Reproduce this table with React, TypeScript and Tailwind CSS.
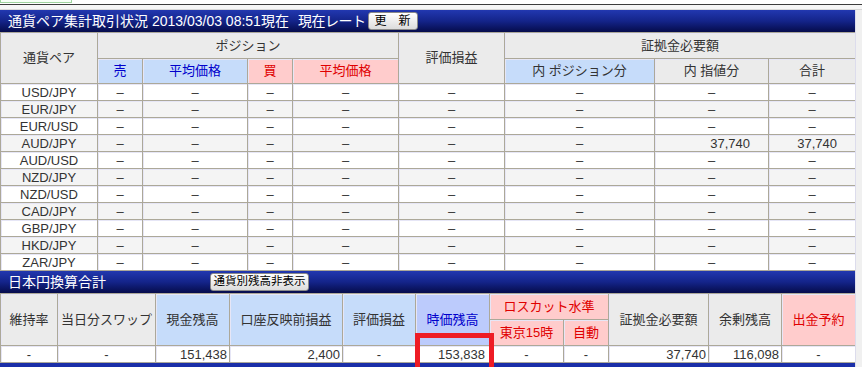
import React from 'react'

const FONT = { fontFamily: '"Liberation Sans", "Noto Sans CJK JP", sans-serif' }

const PAIRS = ['USD/JPY', 'EUR/JPY', 'EUR/USD', 'AUD/JPY', 'AUD/USD', 'NZD/JPY', 'NZD/USD', 'CAD/JPY', 'GBP/JPY', 'HKD/JPY', 'ZAR/JPY']

// orders on AUD/JPY only
const ORDER_MARGIN: Record<string, string> = { 'AUD/JPY': '37,740' }

const cell = 'border border-[#aca899] p-0 shadow-[inset_1px_1px_0_#e6e6f6]'
const grayHead = `${cell} bg-[#ebebeb] text-[#333] font-normal`
const blueHead = `${cell} bg-[#c6dcfa] text-[#0000cc] font-normal`
const redHead = `${cell} bg-[#ffcccc] text-[#e00000] font-normal`

function TitleBar({ children }: { children: React.ReactNode }) {
  return (
    <div className="h-[22px] flex items-center bg-gradient-to-b from-[#2238b0] via-[#14248a] to-[#060c4c] text-white">
      {children}
    </div>
  )
}

function GrayButton({ children, className }: { children: React.ReactNode; className?: string }) {
  return (
    <button className={`h-[18px] flex items-center justify-center whitespace-pre rounded-[3px] border border-[#8a8a8a] bg-gradient-to-b from-white to-[#dcdcdc] text-black leading-none ${className ?? ''}`}>
      {children}
    </button>
  )
}

function PairTable() {
  return (
    <table className="table-fixed border-collapse w-[855px] text-[13px] text-center">
      <colgroup>
        <col className="w-[97px]" />
        <col className="w-[45px]" />
        <col className="w-[105px]" />
        <col className="w-[45px]" />
        <col className="w-[106px]" />
        <col className="w-[106px]" />
        <col className="w-[150px]" />
        <col className="w-[114px]" />
        <col className="w-[87px]" />
      </colgroup>
      <thead>
        <tr className="h-[26px]">
          <th rowSpan={2} className={grayHead}>通貨ペア</th>
          <th colSpan={4} className={grayHead}>ポジション</th>
          <th rowSpan={2} className={grayHead}>評価損益</th>
          <th colSpan={3} className={grayHead}>証拠金必要額</th>
        </tr>
        <tr className="h-[25px]">
          <th className={blueHead}>売</th>
          <th className={blueHead}>平均価格</th>
          <th className={redHead}>買</th>
          <th className={redHead}>平均価格</th>
          <th className={`${cell} bg-[#c6dcfa] text-[#333] font-normal`}>内 ポジション分</th>
          <th className={grayHead}>内 指値分</th>
          <th className={grayHead}>合計</th>
        </tr>
      </thead>
      <tbody className="text-[#333]">
        {PAIRS.map((p, i) => {
          const order = ORDER_MARGIN[p]
          return (
            <tr key={p} className={`h-[17px] leading-[15px] ${i % 2 ? 'bg-[#f4f4f4]' : 'bg-white'}`}>
              <td className={cell}>{p}</td>
              <td className={cell}>–</td>
              <td className={cell}>–</td>
              <td className={cell}>–</td>
              <td className={cell}>–</td>
              <td className={cell}>–</td>
              <td className={cell}>–</td>
              <td className={`${cell} ${order ? 'text-right pr-[18px]' : ''}`}>{order ?? '–'}</td>
              <td className={`${cell} ${order ? 'text-right pr-[18px]' : ''}`}>{order ?? '–'}</td>
            </tr>
          )
        })}
      </tbody>
    </table>
  )
}

function TotalTable() {
  const num = `${cell} text-right pr-[2px]`
  const dash = `${cell} text-center`
  return (
    <table className="table-fixed border-collapse w-[855px] text-[13px] text-center">
      <colgroup>
        <col className="w-[57px]" />
        <col className="w-[98px]" />
        <col className="w-[74px]" />
        <col className="w-[113px]" />
        <col className="w-[73px]" />
        <col className="w-[74px]" />
        <col className="w-[74px]" />
        <col className="w-[45px]" />
        <col className="w-[100px]" />
        <col className="w-[73px]" />
        <col className="w-[74px]" />
      </colgroup>
      <thead>
        <tr className="h-[26px]">
          <th rowSpan={2} className={grayHead}>維持率</th>
          <th rowSpan={2} className={grayHead}>当日分スワップ</th>
          <th rowSpan={2} className={`${cell} bg-[#c6dcfa] text-[#333] font-normal`}>現金残高</th>
          <th rowSpan={2} className={`${cell} bg-[#c6dcfa] text-[#333] font-normal`}>口座反映前損益</th>
          <th rowSpan={2} className={`${cell} bg-[#c6dcfa] text-[#333] font-normal`}>評価損益</th>
          <th rowSpan={2} className={`${cell} bg-[#bccbfc] text-[#0000cc] font-normal`}>時価残高</th>
          <th colSpan={2} className={redHead}>ロスカット水準</th>
          <th rowSpan={2} className={grayHead}>証拠金必要額</th>
          <th rowSpan={2} className={grayHead}>余剰残高</th>
          <th rowSpan={2} className={redHead}>出金予約</th>
        </tr>
        <tr className="h-[26px]">
          <th className={redHead}>東京15時</th>
          <th className={redHead}>自動</th>
        </tr>
      </thead>
      <tbody className="text-[#333] bg-white">
        <tr className="h-[17px] leading-[15px]">
          <td className={dash}>-</td>
          <td className={dash}>-</td>
          <td className={num}>151,438</td>
          <td className={num}>2,400</td>
          <td className={dash}>-</td>
          <td className={`${num} pr-[4px]`}>153,838</td>
          <td className={dash}>-</td>
          <td className={dash}>-</td>
          <td className={num}>37,740</td>
          <td className={num}>116,098</td>
          <td className={dash}>-</td>
        </tr>
      </tbody>
    </table>
  )
}

export default function App() {
  return (
    <div className="relative w-[862px] h-[367px] overflow-hidden bg-white" style={FONT}>
      {/* window strip above the panel */}
      <div className="h-[10px] flex flex-col">
        <div className="h-[4px] bg-white flex">
          <div className="w-[72px] h-[3px] border-x border-b border-[#9fd49f] bg-[#f6fff6]" />
        </div>
        <div className="h-px bg-[#3c3c3c]" />
        <div className="flex-1 bg-[#f6f6f6] border-b border-[#d8d8d8]" />
      </div>

      <div className="flex">
        <div className="w-[855px]">
          <TitleBar>
            <span className="pl-[8px] text-[14px] w-[290px] whitespace-nowrap">通貨ペア集計取引状況 2013/03/03 08:51現在</span>
            <span className="ml-[8px] text-[14px] tracking-[-0.5px]">現在レート</span>
            <GrayButton className="ml-[2px] w-[50px] text-[12px]">更　新</GrayButton>
          </TitleBar>
          <PairTable />
          <TitleBar>
            <span className="pl-[8px] text-[14px] w-[210px]">日本円換算合計</span>
            <GrayButton className="w-[99px] text-[11.5px]">通貨別残高非表示</GrayButton>
          </TitleBar>
          <TotalTable />
          <div className="h-[6px] bg-[#1a2ea8]" />
        </div>
        <div className="flex-1 bg-[#f0f0f0] border-l border-[#dcdcec]" />
      </div>

      {/* highlight frame around the market value */}
      <div className="absolute left-[415px] top-[333px] w-[79px] h-[50px] border-[5px] border-[#ee1c25]" />
    </div>
  )
}
